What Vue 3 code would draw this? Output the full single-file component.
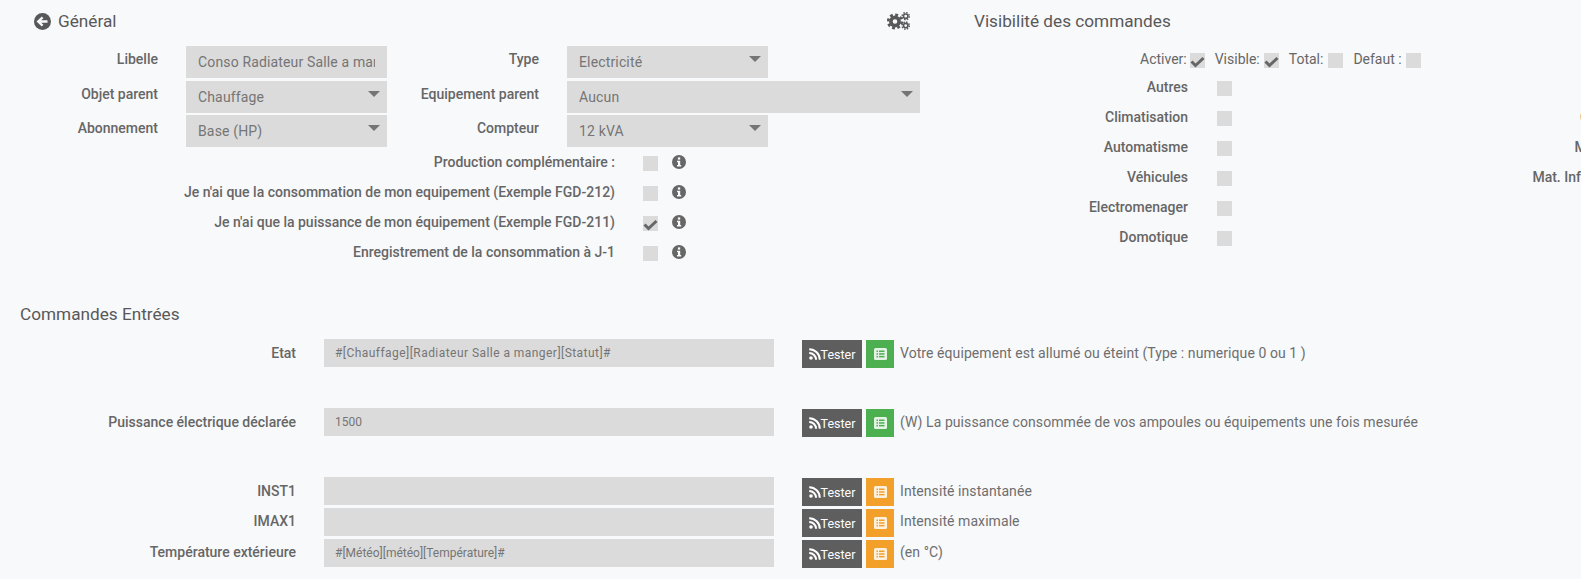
<script setup>
const formRows = [
  { l1: 'Libelle', v1: 'Conso Radiateur Salle a manger', input: true, l2: 'Type', v2: 'Electricité' },
  { l1: 'Objet parent', v1: 'Chauffage', l2: 'Equipement parent', v2: 'Aucun', wide: true },
  { l1: 'Abonnement', v1: 'Base (HP)', l2: 'Compteur', v2: '12 kVA' },
]
const options = [
  { label: 'Production complémentaire :', checked: false },
  { label: "Je n'ai que la consommation de mon equipement (Exemple FGD-212)", checked: false },
  { label: "Je n'ai que la puissance de mon équipement (Exemple FGD-211)", checked: true },
  { label: 'Enregistrement de la consommation à J-1', checked: false },
]
const toggles = [
  { label: 'Activer:', checked: true },
  { label: 'Visible:', checked: true },
  { label: 'Total:', checked: false },
  { label: 'Defaut :', checked: false },
]
const categories = [
  { label: 'Autres', right: '' },
  { label: 'Climatisation', right: 'Chauffage' },
  { label: 'Automatisme', right: 'Multimedia' },
  { label: 'Véhicules', right: 'Mat. Informatique' },
  { label: 'Electromenager', right: '' },
  { label: 'Domotique', right: '' },
]
const commands = [
  { label: 'Etat', value: '#[Chauffage][Radiateur Salle a manger][Statut]#', help: 'Votre équipement est allumé ou éteint (Type : numerique 0 ou 1 )', kind: 'green', spaced: false, tracked: true },
  { label: 'Puissance électrique déclarée', value: '1500', help: '(W) La puissance consommée de vos ampoules ou équipements une fois mesurée', kind: 'green', spaced: true },
  { label: 'INST1', value: '', help: 'Intensité instantanée', kind: 'orange', spaced: true },
  { label: 'IMAX1', value: '', help: 'Intensité maximale', kind: 'orange', spaced: false, raised: true },
  { label: 'Température extérieure', value: '#[Météo][météo][Température]#', help: '(en °C)', kind: 'orange', spaced: false, raised: true },
]
</script>

<template>
  <div class="page">
    <div class="top">
      <section class="general">
        <header class="head">
          <h2 class="title with-icon">
            <svg class="back" viewBox="0 0 17 17" width="17" height="17">
              <circle cx="8.5" cy="8.5" r="8.5" fill="#585858" />
              <path d="M13.5 8.5H5M8.6 4.3 4.2 8.5l4.4 4.2" fill="none" stroke="#f8f9fb" stroke-width="2.3" />
            </svg>
            Général
          </h2>
          <svg class="gears" viewBox="0 0 23 18" width="23" height="18">
            <g fill="none" stroke="#585858">
              <circle cx="8" cy="9.5" r="4.1" stroke-width="3.6" />
              <circle cx="8" cy="9.5" r="6.8" stroke-width="2.6" stroke-dasharray="2.9 2.44" />
              <circle cx="18.7" cy="4.2" r="2.2" stroke-width="1.6" />
              <circle cx="18.7" cy="4.2" r="3.6" stroke-width="1.4" stroke-dasharray="1.5 1.33" />
              <circle cx="18.7" cy="13.6" r="2.2" stroke-width="1.6" />
              <circle cx="18.7" cy="13.6" r="3.6" stroke-width="1.4" stroke-dasharray="1.5 1.33" />
            </g>
          </svg>
        </header>

        <div class="form">
          <template v-for="row in formRows" :key="row.l1">
            <label class="flabel">{{ row.l1 }}</label>
            <input v-if="row.input" class="field" :value="row.v1" readonly />
            <div v-else class="field select">{{ row.v1 }}</div>
            <label class="flabel">{{ row.l2 }}</label>
            <div class="field select" :class="{ wide: row.wide }">{{ row.v2 }}</div>
          </template>
        </div>

        <div class="options">
          <div v-for="o in options" :key="o.label" class="option">
            <span class="olabel">{{ o.label }}</span>
            <span class="cb low">
              <svg v-if="o.checked" viewBox="0 0 15 15" width="15" height="15">
                <path d="M1.5 8.5 5.5 12.5 13.5 5" fill="none" stroke="#666" stroke-width="3" />
              </svg>
            </span>
            <svg class="info" viewBox="0 0 14 14" width="14" height="14">
              <circle cx="7" cy="7" r="7" fill="#666" />
              <rect x="5.9" y="2.4" width="2.3" height="2.2" fill="#f8f9fb" />
              <path d="M5 5.8h3.2v4.3h1v1.5H5v-1.5h1V7.3H5z" fill="#f8f9fb" />
            </svg>
          </div>
        </div>
      </section>

      <section class="visibility">
        <header class="head">
          <h2 class="title">Visibilité des commandes</h2>
        </header>
        <div class="toggles">
          <div v-for="t in toggles" :key="t.label" class="toggle">
            <span>{{ t.label }}</span>
            <span class="cb low">
              <svg v-if="t.checked" viewBox="0 0 15 15" width="15" height="15">
                <path d="M1.5 8.5 5.5 12.5 13.5 5" fill="none" stroke="#666" stroke-width="3" />
              </svg>
            </span>
          </div>
        </div>
        <div class="cats">
          <div v-for="c in categories" :key="c.label" class="cat">
            <span class="catlabel">{{ c.label }}</span>
            <span class="cb low"></span>
            <span class="catright">{{ c.right }}</span>
          </div>
        </div>
      </section>
    </div>

    <h2 class="title section">Commandes Entrées</h2>

    <div class="commands">
      <div v-for="c in commands" :key="c.label" class="cmd" :class="{ spaced: c.spaced, raised: c.raised }">
        <label class="cmdlabel">{{ c.label }}</label>
        <input class="cmdinput" :class="{ tracked: c.tracked }" :value="c.value" readonly />
        <button class="tester" type="button">
          <svg viewBox="0 0 12 12" width="12" height="12">
            <circle cx="2" cy="10" r="1.8" fill="#fff" />
            <path d="M0.2 4.9A6.9 6.9 0 0 1 7.1 11.8M0.2 1.2A10.6 10.6 0 0 1 10.8 11.8" fill="none" stroke="#fff" stroke-width="2" />
          </svg>Tester
        </button>
        <button class="config" :class="c.kind" type="button">
          <svg viewBox="0 0 13 12" width="13" height="12">
            <rect width="13" height="12" rx="1.5" fill="#fff" fill-opacity="0.85" />
            <g :class="c.kind + '-ink'">
              <rect x="2.5" y="2.5" width="1.5" height="1.5" />
              <rect x="2.5" y="5.2" width="1.5" height="1.5" />
              <rect x="2.5" y="7.9" width="1.5" height="1.5" />
              <rect x="5" y="2.5" width="5.5" height="1.5" />
              <rect x="5" y="5.2" width="5.5" height="1.5" />
              <rect x="5" y="7.9" width="5.5" height="1.5" />
            </g>
          </svg>
        </button>
        <span class="help">{{ c.help }}</span>
      </div>
    </div>
  </div>
</template>

<style scoped>
.page {
  width: 1581px;
  height: 579px;
  overflow: hidden;
  background: #f8f9fb;
  color: #666;
  font-family: Roboto, "Liberation Sans", sans-serif;
  font-size: 14px;
}
.top {
  display: flex;
}
.general {
  flex: none;
  width: 974px;
}
.visibility {
  flex: none;
  width: 700px;
}
.head {
  display: flex;
  align-items: center;
  justify-content: space-between;
  height: 42px;
  width: 910px;
}
.general .head {
  padding-left: 34px;
  box-sizing: border-box;
}
.title {
  margin: 0;
  font-size: 17.2px;
  font-weight: 400;
  line-height: 20px;
  color: #585858;
}
.with-icon {
  display: flex;
  align-items: center;
  gap: 7px;
}
.form {
  display: grid;
  grid-template-columns: 158px 201px 124px 353px;
  column-gap: 28px;
  row-gap: 2.5px;
  grid-auto-rows: 32px;
  margin-top: 4px;
}
.flabel {
  display: flex;
  align-items: center;
  justify-content: flex-end;
  padding-bottom: 6px;
  font-weight: 500;
  white-space: nowrap;
}
.field {
  box-sizing: border-box;
  width: 201px;
  height: 32px;
  padding: 0 12px;
  border: 0;
  border-radius: 0;
  outline: 0;
  background: #dbdbdb;
  color: #757575;
  font: 400 14px Roboto, "Liberation Sans", sans-serif;
  letter-spacing: 0.15px;
}
.select {
  position: relative;
  display: flex;
  align-items: center;
}
.select::after {
  content: "";
  position: absolute;
  top: 10px;
  right: 7px;
  border-style: solid;
  border-width: 6px 6px 0;
  border-color: #757575 transparent transparent;
}
.wide {
  width: 353px;
}
.options {
  display: flex;
  flex-direction: column;
}
.option {
  display: grid;
  grid-template-columns: 615px 15px 14px;
  column-gap: 28px;
  align-items: center;
  height: 30px;
}
.option .info {
  margin-left: -14px;
}
.olabel {
  text-align: right;
  font-weight: 500;
  white-space: nowrap;
}
.cb {
  display: block;
  flex: none;
  width: 15px;
  height: 15px;
  background: #dbdbdb;
}
.cb svg {
  display: block;
}
.low {
  margin-top: 3px;
}
.toggles {
  display: flex;
  gap: 10px;
  height: 18px;
  margin-top: 8px;
  padding-left: 166px;
  line-height: 18px;
}
.toggle {
  display: flex;
  align-items: center;
  gap: 4px;
}
.toggle:first-child {
  gap: 3px;
}
.toggle:nth-child(3) {
  gap: 5px;
}
.cats {
  margin-top: 4px;
}
.cat {
  display: grid;
  grid-template-columns: 214px 15px 384px;
  column-gap: 29px;
  align-items: center;
  height: 30px;
}
.catlabel,
.catright {
  text-align: right;
  font-weight: 500;
  white-space: nowrap;
}
.section {
  margin-top: 37px;
  padding-left: 20px;
}
.commands {
  margin-top: 15px;
}
.cmd {
  display: flex;
  align-items: flex-start;
  height: 28px;
  margin-top: 3px;
}
.cmd:first-child {
  margin-top: 0;
}
.cmd.spaced {
  margin-top: 41px;
}
.cmdlabel {
  flex: none;
  width: 296px;
  line-height: 28px;
  text-align: right;
  font-weight: 500;
}
.cmdinput {
  flex: none;
  box-sizing: border-box;
  width: 450px;
  height: 28px;
  margin-left: 28px;
  padding: 0 11px;
  border: 0;
  border-radius: 0;
  outline: 0;
  background: #dbdbdb;
  color: #757575;
  font: 400 12px Roboto, "Liberation Sans", sans-serif;
}
.tracked {
  letter-spacing: 0.45px;
}
.tester,
.config {
  flex: none;
  display: flex;
  align-items: center;
  justify-content: center;
  box-sizing: border-box;
  height: 28px;
  margin-top: 1px;
  padding: 0;
  border: 0;
  border-radius: 0;
  color: #fff;
  font: 400 12.5px Roboto, "Liberation Sans", sans-serif;
}
.tester {
  width: 60px;
  margin-left: 28px;
  background: #5e5e5e;
}
.config {
  width: 28px;
  margin-left: 4px;
}
.green {
  background: #4caf50;
}
.orange {
  background: #f2a02a;
}
.green-ink {
  fill: #4caf50;
}
.orange-ink {
  fill: #f2a02a;
}
.help {
  margin-left: 6px;
  line-height: 28px;
  white-space: nowrap;
  color: #6e6e6e;
  letter-spacing: 0.07px;
}
.raised .cmdlabel,
.raised .help {
  line-height: 26px;
}
</style>

<style>
html,
body {
  margin: 0;
  overflow: hidden;
}
</style>
